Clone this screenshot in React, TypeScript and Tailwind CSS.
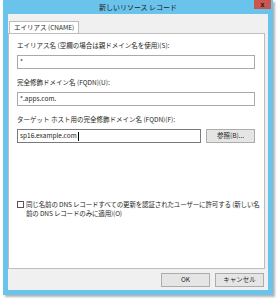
import React from 'react';

const font = { fontFamily: '"Noto Sans CJK JP", "Noto Sans", sans-serif' };

const Field = ({ label, value }: { label: string; value: string }) => (
  <div className="flex flex-col">
    <div className="h-[12px] leading-[12px] text-[6.5px] text-[#1e1e1e]">{label}</div>
    <div className="mt-[4px] w-[238px] h-[14px] border border-[#a9a9a9] bg-white px-[2px] flex items-center text-[6.5px] text-[#1e1e1e]">
      {value}
    </div>
  </div>
);

const Button = ({ children, w }: { children: React.ReactNode; w: string }) => (
  <button className={`${w} h-[14px] border border-[#acacac] bg-[#e5e5e5] text-[6.5px] text-[#1e1e1e] flex items-center justify-center`}>
    {children}
  </button>
);

const App = () => {
  return (
    <div className="w-[277px] h-[300px] bg-white pl-[3px]" style={font}>
      <div className="w-[270px] h-[295px] bg-[#69c3ea] flex flex-col shadow-[2px_2px_2px_rgba(0,0,0,0.3)]">
        {/* title bar */}
        <div className="relative h-[14px] flex items-center justify-center">
          <span className="text-[7px] text-[#222] leading-none">新しいリソース レコード</span>
          <div className="absolute right-[2px] top-0 w-[17px] h-[9px] bg-[#c9574f] flex items-center justify-center">
            <span className="text-[7px] font-bold leading-none text-[#3a1010]">x</span>
          </div>
        </div>

        <div className="flex-1 mx-[5px] mb-[5px] bg-[#f0f0f0] flex flex-col">
          {/* tabs */}
          <div className="pt-[7px] pl-[1px] flex">
            <div className="h-[12px] px-[4px] border border-b-0 border-[#bdbdbd] bg-white flex items-center text-[6.5px] text-[#1e1e1e]">
              エイリアス (CNAME)
            </div>
          </div>
          <div className="mr-[3px] h-[236px] border border-[#bdbdbd] bg-white pl-[8px] pr-[1px] pt-[5px] flex flex-col">
            <div className="flex flex-col gap-[7px]">
              <Field label="エイリアス名 (空欄の場合は親ドメイン名を使用)(S):" value="*" />
              <Field label="完全修飾ドメイン名 (FQDN)(U):" value="*.apps.com." />
              <div className="flex flex-col">
                <div className="h-[12px] leading-[12px] text-[6.5px] text-[#1e1e1e]">
                  ターゲット ホスト用の完全修飾ドメイン名 (FQDN)(F):
                </div>
                <div className="mt-[4px] flex gap-[5px]">
                  <div className="w-[184px] h-[14px] border border-[#7a7a7a] bg-white px-[2px] flex items-center text-[6.5px] text-[#1e1e1e]">
                    sp16.example.com
                    <span className="ml-[1px] inline-block w-px h-[9px] bg-black" />
                  </div>
                  <Button w="w-[49px]">参照(B)...</Button>
                </div>
              </div>
            </div>

            <div className="mt-[57px] flex gap-[2px]">
              <div className="mt-[1px] w-[7px] h-[7px] shrink-0 border border-[#555] bg-white" />
              <div className="whitespace-nowrap text-[6.5px] leading-[9px] tracking-[-0.15px] text-[#1e1e1e]">
                同じ名前の DNS レコードすべての更新を認証されたユーザーに許可する (新しい名
                <br />
                前の DNS レコードのみに適用)(O)
              </div>
            </div>
          </div>

          {/* footer */}
          <div className="flex-1 flex items-center justify-end gap-[5px] pr-[4px]">
            <Button w="w-[49px]">OK</Button>
            <Button w="w-[49px]">キャンセル</Button>
          </div>
        </div>
      </div>
    </div>
  );
};

export default App;
